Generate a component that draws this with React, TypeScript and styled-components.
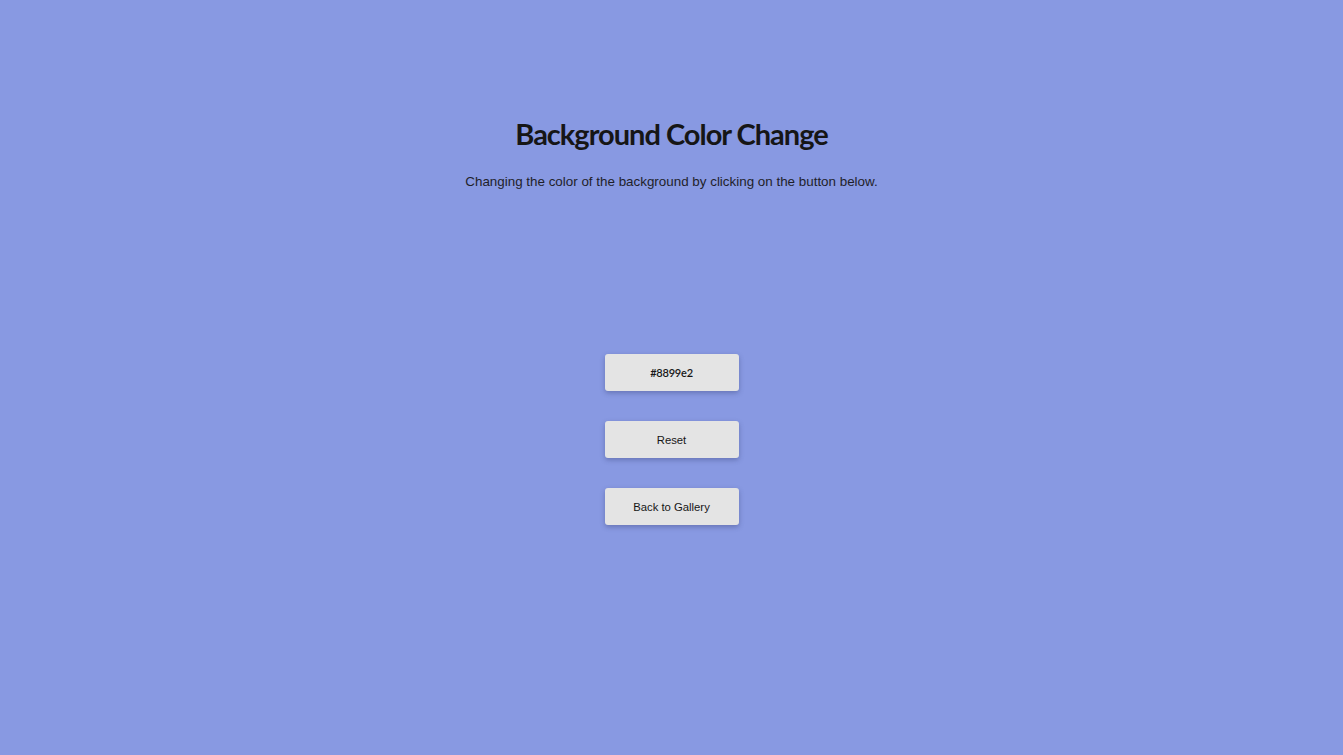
import React from "react";
import styled, { createGlobalStyle } from "styled-components";

const Global = createGlobalStyle`
  html, body { margin: 0; padding: 0; }
  body { background: #8899e2; min-height: 755px; }
`;

const Page = styled.main`
  min-height: 755px;
  display: flex;
  flex-direction: column;
  align-items: center;
  padding-top: 113px;
  box-sizing: border-box;
  color: #1a1a1a;
`;

const Title = styled.h1`
  margin: 0;
  font-family: Lato, "Open Sans", sans-serif;
  font-weight: 700;
  font-size: 29px;
  line-height: 42px;
  letter-spacing: -1px;
  color: #161616;
`;

const Lead = styled.p`
  margin: 18px 0 0;
  font-family: "Liberation Sans", Arial, sans-serif;
  font-size: 13.4px;
  line-height: 18px;
  color: #1f1f2a;
`;

const Buttons = styled.div`
  margin-top: 163px;
  display: flex;
  flex-direction: column;
  gap: 30px;
`;

const Button = styled.button<{ $alt?: boolean }>`
  width: 134px;
  height: 37px;
  border: none;
  border-radius: 3px;
  background: #e4e4e4;
  box-shadow: 0 2px 5px rgba(40, 50, 100, 0.35);
  font-family: ${(p) =>
    p.$alt ? 'Lato, "Open Sans", sans-serif' : '"Liberation Sans", Arial, sans-serif'};
  font-size: ${(p) => (p.$alt ? "11px" : "11.3px")};
  font-weight: ${(p) => (p.$alt ? 600 : 400)};
  letter-spacing: ${(p) => (p.$alt ? "-0.2px" : "0")};
  color: #161616;
  cursor: pointer;
  padding: 0;
`;

export default function App() {
  return (
    <>
      <Global />
      <Page>
        <Title>Background Color Change</Title>
        <Lead>Changing the color of the background by clicking on the button below.</Lead>
        <Buttons>
          <Button $alt>#8899e2</Button>
          <Button>Reset</Button>
          <Button>Back to Gallery</Button>
        </Buttons>
      </Page>
    </>
  );
}
